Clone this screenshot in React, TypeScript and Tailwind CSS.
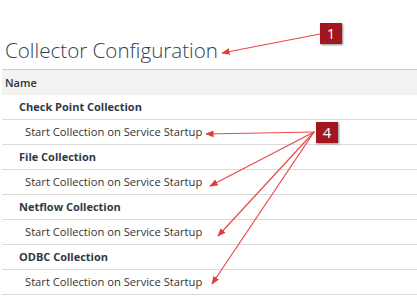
const groups = [
  "Check Point Collection",
  "File Collection",
  "Netflow Collection",
  "ODBC Collection",
];

function Badge({ n }: { n: string }) {
  return (
    <div className="flex h-[21px] w-[22px] items-center justify-center bg-[#a1161f] text-[15px] leading-none text-white shadow-[1px_1px_2px_rgba(0,0,0,0.45)]">
      {n}
    </div>
  );
}

export default function App() {
  return (
    <div
      className="relative h-[299px] w-[417px] overflow-hidden bg-white"
      style={{ fontFamily: '"Open Sans", sans-serif' }}
    >
      <h1 className="pl-[5px] pt-[36px] text-[20.6px] font-light leading-[28px] text-[#34414f]">
        Collector Configuration
      </h1>

      <div className="ml-[2px] mt-[5px]">
        <div className="flex h-[26px] items-center border-t border-[#cfcfcf] bg-[#f2f2f2] pl-[3px] pt-[1px] text-[11px] font-semibold text-[#333]">
          Name
        </div>
        {groups.map((g) => (
          <div key={g}>
            <div className="flex h-[25px] items-center border-b border-[#dadada] pl-[17px] text-[11px] font-bold text-[#2e3946]">
              {g}
            </div>
            <div className="flex h-[25px] items-center border-b border-[#dadada] pl-[23px] text-[11.2px] text-[#333]">
              Start Collection on Service Startup
            </div>
          </div>
        ))}
      </div>

      {/* callout badges */}
      <div className="absolute left-[320px] top-[23px]">
        <Badge n="1" />
      </div>
      <div className="absolute left-[316px] top-[122px]">
        <Badge n="4" />
      </div>

      {/* callout arrows */}
      <svg className="pointer-events-none absolute left-0 top-0" width="417" height="299">
        <defs>
          <marker id="ah" viewBox="0 0 10 10" refX="9" refY="5" markerWidth="7" markerHeight="7" orient="auto-start-reverse">
            <path d="M0 1 L10 5 L0 9 Z" fill="#e23c3c" />
          </marker>
        </defs>
        <g stroke="#e94848" strokeWidth="1.2" fill="none" markerEnd="url(#ah)">
          <line x1="320" y1="34" x2="222" y2="53" />
          <line x1="315" y1="132" x2="206" y2="134" />
          <line x1="314" y1="132" x2="210" y2="186" />
          <line x1="314" y1="132" x2="218" y2="236" />
          <line x1="314" y1="132" x2="212" y2="284" />
        </g>
      </svg>
    </div>
  );
}
